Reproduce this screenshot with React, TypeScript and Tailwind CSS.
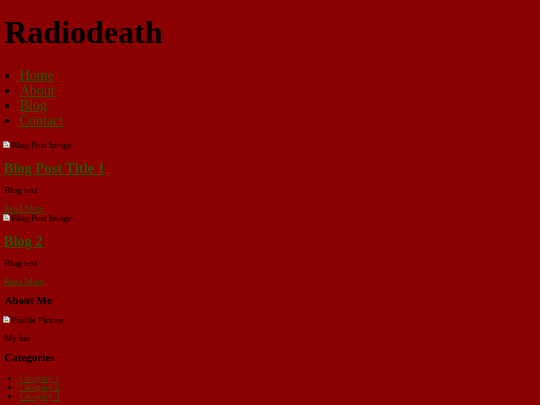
import React from 'react';

const serif = { fontFamily: '"Liberation Serif", "Times New Roman", serif' };

function BrokenImage({ alt }: { alt: string }) {
  return (
    <div className="flex items-start h-[10px] pl-[3px] text-[9px] leading-[10px] text-black">
      <svg className="mt-[1px] w-[7px] h-[7px] shrink-0" viewBox="0 0 16 16">
        <path d="M1 1h10l4 4v10H1z" fill="#f4f4f4" stroke="#9a9a9a" strokeWidth="1.2" />
        <path d="M3 12l3-4 2 2 2-3 3 5z" fill="#5a9a3a" />
        <rect x="3" y="3" width="6" height="4" fill="#7fb0e0" />
      </svg>
      <span className="ml-[1px]">{alt}</span>
    </div>
  );
}

function Post({ title }: { title: string }) {
  return (
    <div>
      <BrokenImage alt="Blog Post Image" />
      <h2 className="mt-[10px] pl-[4px] text-[14.5px] leading-[17px] font-bold">
        <a href="#" className="text-[#2a5000] underline">{title}</a>
      </h2>
      <p className="mt-[8px] pl-[4px] text-[9px] leading-[10px] text-black">Blog text</p>
      <p className="mt-[8px] pl-[4px] text-[9px] leading-[10px]">
        <a href="#" className="text-[#2a5000] underline">Read More</a>
      </p>
    </div>
  );
}

export default function App() {
  const nav = ['Home', 'About', 'Blog', 'Contact'];
  const categories = ['Category 1', 'Category 2', 'Category 3'];
  return (
    <div className="min-h-[405px] w-full bg-[#8b0000] text-black overflow-hidden pt-[14px]" style={serif}>
      {/* Header */}
      <h1 className="pl-[4px] text-[32px] leading-[36px] font-bold">Radiodeath</h1>
      <ul className="mt-[18px] pl-[20px] list-disc text-[14px] leading-[15px]">
        {nav.map((item) => (
          <li key={item}>
            <a href="#" className="text-[#2a5000] underline">{item}</a>
          </li>
        ))}
      </ul>

      {/* Posts */}
      <div className="mt-[12px]">
        <Post title="Blog Post Title 1" />
        <Post title="Blog 2" />
      </div>

      {/* Sidebar */}
      <h3 className="mt-[8px] pl-[4px] text-[11px] leading-[13px] font-bold">About Me</h3>
      <div className="mt-[8px]">
        <BrokenImage alt="Profile Picture" />
      </div>
      <p className="mt-[8px] pl-[4px] text-[9px] leading-[10px]">My bio</p>
      <h3 className="mt-[8px] pl-[4px] text-[11px] leading-[13px] font-bold">Categories</h3>
      <ul className="mt-[10px] pl-[20px] list-disc text-[9px] leading-[9px]">
        {categories.map((c) => (
          <li key={c}>
            <a href="#" className="text-[#2a5000] underline">{c}</a>
          </li>
        ))}
      </ul>
    </div>
  );
}
